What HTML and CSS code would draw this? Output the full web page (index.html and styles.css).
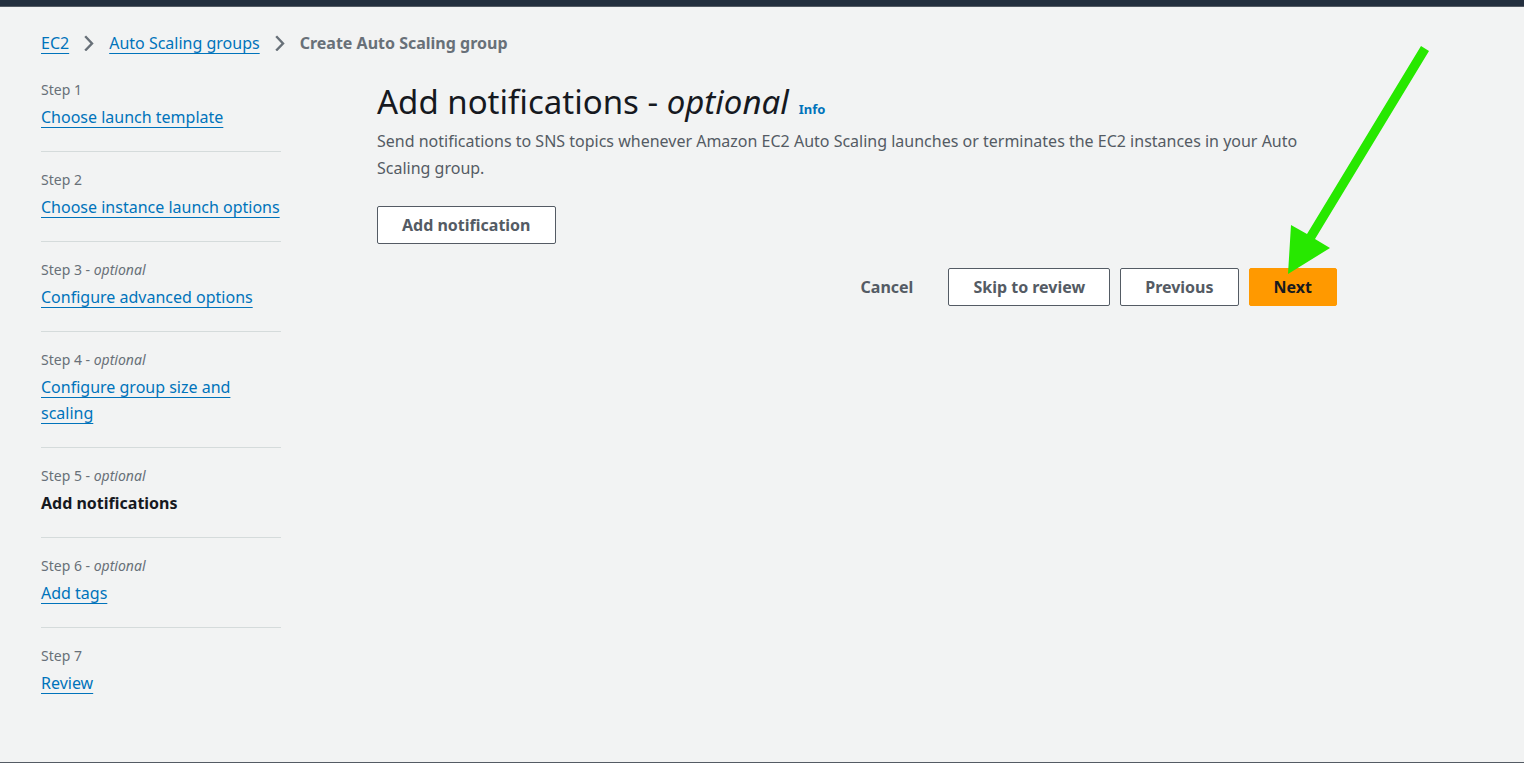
FILE: index.html
```html
<!DOCTYPE html>
<html lang="en">
<head>
<meta charset="utf-8">
<title>Create Auto Scaling group</title>
<link rel="stylesheet" href="styles.css">
</head>
<body>
<header class="topbar"></header>
<div class="page">
  <nav class="breadcrumbs" aria-label="Breadcrumbs">
    <a class="link" href="#">EC2</a>
    <svg class="chevron" viewBox="0 0 10 16" aria-hidden="true"><path d="M1.2 1.2 L8 8.5 L1.2 15.5"/></svg>
    <a class="link" href="#">Auto Scaling groups</a>
    <svg class="chevron" viewBox="0 0 10 16" aria-hidden="true"><path d="M1.2 1.2 L8 8.5 L1.2 15.5"/></svg>
    <span class="current">Create Auto Scaling group</span>
  </nav>
  <div class="wizard">
    <ol class="steps">
      <li class="step"><span class="step-label">Step 1</span><div class="step-name"><a class="link" href="#">Choose launch template</a></div></li>
      <li class="step"><span class="step-label">Step 2</span><div class="step-name"><a class="link" href="#">Choose instance launch options</a></div></li>
      <li class="step"><span class="step-label">Step 3 - <em>optional</em></span><div class="step-name"><a class="link" href="#">Configure advanced options</a></div></li>
      <li class="step"><span class="step-label">Step 4 - <em>optional</em></span><div class="step-name"><a class="link" href="#">Configure group size and scaling</a></div></li>
      <li class="step"><span class="step-label">Step 5 - <em>optional</em></span><div class="step-name active">Add notifications</div></li>
      <li class="step"><span class="step-label">Step 6 - <em>optional</em></span><div class="step-name"><a class="link" href="#">Add tags</a></div></li>
      <li class="step"><span class="step-label">Step 7</span><div class="step-name"><a class="link" href="#">Review</a></div></li>
    </ol>
    <main class="content">
      <div class="heading">
        <h1 class="title">Add notifications - <em>optional</em></h1>
        <a class="info" href="#">Info</a>
      </div>
      <p class="description">Send notifications to SNS topics whenever Amazon EC2 Auto Scaling launches or terminates the EC2 instances in your Auto Scaling group.</p>
      <button class="button" type="button">Add notification</button>
      <div class="actions">
        <button class="button plain" type="button">Cancel</button>
        <button class="button" type="button">Skip to review</button>
        <button class="button" type="button">Previous</button>
        <div class="next">
          <button class="button primary" type="button">Next</button>
          <svg class="arrow" viewBox="0 0 150 235" aria-hidden="true"><path d="M136 2 L144 7 L30 195 L45 204 L3 230 L6 181 L22 190 Z"/></svg>
        </div>
      </div>
    </main>
  </div>
</div>
<footer class="footer"></footer>
</body>
</html>
```
FILE: styles.css
```css
* { box-sizing: border-box; }
body {
  margin: 0;
  min-height: 100vh;
  display: flex;
  flex-direction: column;
  background: #f2f3f3;
  color: #16191f;
  font-family: "Noto Sans", "Open Sans", sans-serif;
  font-size: 16px;
  line-height: 26px;
}
.topbar { height: 7px; background: #232f3e; border-bottom: 1px solid #545b64; }
.footer { height: 1px; background: #545b64; }
.page { flex: 1; padding: 23px 40px 24px 41px; }
.link {
  color: #0073bb;
  text-decoration: underline;
  text-decoration-thickness: 1px;
  text-decoration-skip-ink: none;
  text-underline-offset: 4px;
}
.breadcrumbs { display: flex; align-items: center; gap: 15px; }
.chevron { width: 10px; height: 16px; fill: none; stroke: #687078; stroke-width: 2.4; }
.current { color: #687078; font-weight: 700; }
.wizard {
  display: grid;
  grid-template-columns: 240px minmax(0, 960px);
  gap: 96px;
  padding-top: 23px;
}
.steps { list-style: none; margin: 0; padding: 0; }
.step { padding: 17px 0 21px; border-bottom: 1px solid #d5dbdb; }
.step:first-child { padding-top: 0; }
.step:last-child { border-bottom: 0; }
.step-label { display: block; margin-bottom: 3px; color: #687078; font-size: 14px; line-height: 22px; }
.active { font-weight: 700; }
.heading { display: flex; align-items: baseline; gap: 10px; margin-bottom: 3px; }
.title { margin: 0; font-size: 33px; line-height: 46px; font-weight: 400; }
.info { color: #0073bb; font-size: 13px; font-weight: 700; text-decoration: none; }
.description { margin: 0 0 24px; color: #545b64; line-height: 27px; }
.button {
  height: 38px;
  padding: 0 24px;
  border: 1px solid #545b64;
  border-radius: 2px;
  background: #fff;
  color: #545b64;
  font-family: inherit;
  font-size: 16px;
  line-height: 26px;
  font-weight: 700;
  white-space: nowrap;
}
.plain { background: transparent; border-color: transparent; }
.primary { background: #ff9900; border-color: #ff9900; color: #16191f; }
.actions { display: flex; justify-content: flex-end; gap: 10px; margin-top: 24px; }
.next { position: relative; }
.arrow {
  position: absolute;
  left: 36px;
  top: -224px;
  width: 150px;
  height: 235px;
  fill: #27e800;
  pointer-events: none;
}
```
